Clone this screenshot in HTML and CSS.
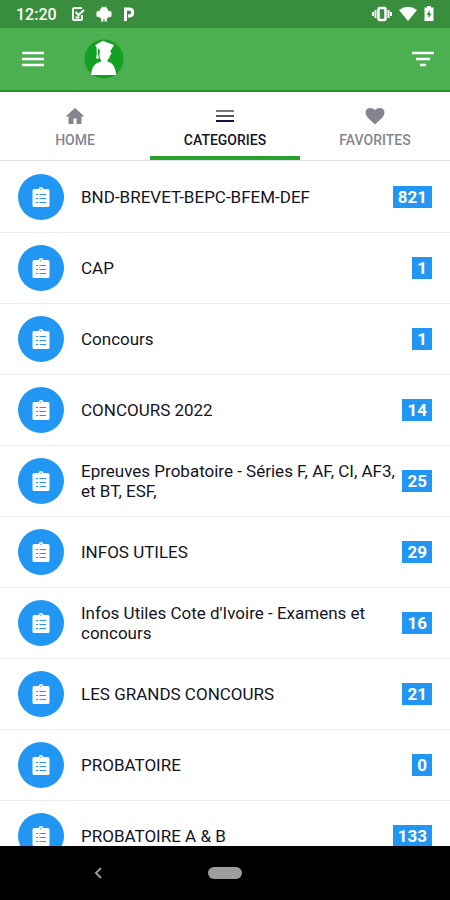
FILE: index.html
```html
<!DOCTYPE html>
<html lang="fr">
<head>
    <meta charset="UTF-8">
    <meta name="viewport" content="width=device-width, initial-scale=1.0">
    <title>Categories</title>
    <link rel="stylesheet" href="styles.css">
</head>
<body>
    <!-- Shared clipboard icon -->
    <svg class="sprite" aria-hidden="true">
        <symbol id="clipboard" viewBox="0 0 18 22">
            <path fill="#fff" d="M2 3h4.500a2.600 2.600 0 0 1 5 0H16a1.500 1.500 0 0 1 1.500 1.500v15A1.500 1.500 0 0 1 16 21H2a1.500 1.500 0 0 1-1.500-1.500v-15A1.500 1.500 0 0 1 2 3z"/>
            <circle cx="9" cy="3.200" r="0.700" fill="#2196f3"/>
            <path stroke="#2196f3" stroke-width="1" d="M4 8.500h2M7.500 8.500H14M4 12.500h2M7.500 12.500H14M4 16.500h2M7.500 16.500H14"/>
        </symbol>
    </svg>

    <div class="status-bar">
        <span class="clock">12:20</span>
        <div class="status-left">
            <svg width="14" height="16" viewBox="0 0 14 16" fill="none" stroke="#fff" stroke-width="2">
                <path d="M11 2H3.500Q2 2 2 3.500v9Q2 14 3.500 14h6q1.500 0 1.500-1.500V9"/>
                <path d="M4.500 6l3 3L13 4M4.500 11.500h4"/>
            </svg>
            <svg width="16" height="16" viewBox="0 0 16 16" fill="#fff">
                <path d="M3.500 5.500C3.500 3.500 5 2 6 1.500L5.300.5h1l.7.700h2l.7-.7h1L10 1.500c1 .5 2.500 2 2.500 4z"/>
                <path d="M3.500 5h9v7h-1.500v3.500H8.500V13H7.500v2.500H5V12H3.500z"/>
                <rect x="0.500" y="5" width="3.500" height="6" rx="1.500"/>
                <rect x="12" y="5" width="3.500" height="6" rx="1.500"/>
            </svg>
            <svg width="12" height="16" viewBox="0 0 12 16" fill="none" stroke="#fff" stroke-width="3">
                <path d="M2.500 15V3H6q3.700 0 3.700 3.500T6 10H5"/>
            </svg>
        </div>
        <div class="status-right">
            <svg width="20" height="16" viewBox="0 0 20 16" fill="none" stroke="#fff">
                <rect x="6.500" y="2" width="7" height="12" rx="1" stroke-width="2.500"/>
                <path stroke-width="2" d="M3.500 4v8M1 6v4M16.500 4v8M19 6v4"/>
            </svg>
            <svg width="18" height="16" viewBox="0 0 18 16" fill="#fff">
                <path d="M0 4Q9-2.500 18 4L9 15z"/>
            </svg>
            <svg width="10" height="16" viewBox="0 0 10 16">
                <path fill="#fff" d="M3 0h4v1.500h2.500V15H.5V1.500H3z"/>
                <path fill="#388e3c" d="M5.800 4L2.500 9h2v3.500l3-5h-2z"/>
            </svg>
        </div>
    </div>

    <header class="app-bar">
        <button class="icon-button" type="button" aria-label="Menu">
            <svg width="22" height="16" viewBox="0 0 22 16" stroke="#fff" stroke-width="2.500">
                <path d="M0 2h22M0 8h22M0 14h22"/>
            </svg>
        </button>
        <svg class="logo" width="40" height="40" viewBox="0 0 40 40">
            <circle cx="20" cy="20" r="19.500" fill="#13a025"/>
            <path fill="#fff" d="M11 6.300l7.700-4.600L30 6l-3 5H16l-3-2.500z"/>
            <path fill="#fff" d="M16 9h10.500v3.500l1 2.500-1.200 1q-.8 3.500-2.800 5v1.500q4.500 1 6.500 5 1.800 4 2.200 8.500H7q.3-5 2.300-8.500 2-3.500 7.700-5V21q-1.500-2-1.500-4z"/>
            <path fill="#fff" d="M12.500 7h1.500v8l1 4.500h-3l.8-4.500z"/>
        </svg>
        <button class="icon-button filter-button" type="button" aria-label="Filter">
            <svg width="22" height="16" viewBox="0 0 22 16" stroke="#fff" stroke-width="2.500">
                <path d="M0 2h22M4 8h14M8 14h6"/>
            </svg>
        </button>
    </header>

    <nav class="tabs">
        <a class="tab" href="#home">
            <svg width="20" height="18" viewBox="0 0 20 18" fill="currentColor">
                <path d="M10 1l9.500 8.500h-3V17h-5v-5.500h-3V17h-5V9.500h-3z"/>
            </svg>
            HOME
        </a>
        <a class="tab active" href="#categories" aria-current="page">
            <svg width="20" height="18" viewBox="0 0 20 18" fill="none" stroke-width="2">
                <path stroke="#77778a" d="M1 4h18"/>
                <path stroke="#55556a" d="M1 9h18"/>
                <path stroke="#15153a" d="M1 14h18"/>
            </svg>
            CATEGORIES
        </a>
        <a class="tab" href="#favorites">
            <svg width="20" height="18" viewBox="0 0 20 18" fill="currentColor">
                <path d="M10 17.500L3 11Q.5 8.500.5 5.800.5 1 5.500 1 8.300 1 10 3q1.700-2 4.500-2 5 0 5 4.800 0 2.700-2.500 5.200z"/>
            </svg>
            FAVORITES
        </a>
    </nav>

    <main class="categories">
        <ul class="category-list">
            <li><a class="category" href="#">
                <span class="avatar"><svg width="18" height="22"><use href="#clipboard"/></svg></span>
                <span class="name">BND-BREVET-BEPC-BFEM-DEF</span>
                <span class="count">821</span>
            </a></li>
            <li><a class="category" href="#">
                <span class="avatar"><svg width="18" height="22"><use href="#clipboard"/></svg></span>
                <span class="name">CAP</span>
                <span class="count">1</span>
            </a></li>
            <li><a class="category" href="#">
                <span class="avatar"><svg width="18" height="22"><use href="#clipboard"/></svg></span>
                <span class="name">Concours</span>
                <span class="count">1</span>
            </a></li>
            <li><a class="category" href="#">
                <span class="avatar"><svg width="18" height="22"><use href="#clipboard"/></svg></span>
                <span class="name">CONCOURS 2022</span>
                <span class="count">14</span>
            </a></li>
            <li><a class="category" href="#">
                <span class="avatar"><svg width="18" height="22"><use href="#clipboard"/></svg></span>
                <span class="name">Epreuves Probatoire - Séries F, AF, CI, AF3, et BT, ESF,</span>
                <span class="count">25</span>
            </a></li>
            <li><a class="category" href="#">
                <span class="avatar"><svg width="18" height="22"><use href="#clipboard"/></svg></span>
                <span class="name">INFOS UTILES</span>
                <span class="count">29</span>
            </a></li>
            <li><a class="category" href="#">
                <span class="avatar"><svg width="18" height="22"><use href="#clipboard"/></svg></span>
                <span class="name">Infos Utiles Cote d'Ivoire - Examens et concours</span>
                <span class="count">16</span>
            </a></li>
            <li><a class="category" href="#">
                <span class="avatar"><svg width="18" height="22"><use href="#clipboard"/></svg></span>
                <span class="name">LES GRANDS CONCOURS</span>
                <span class="count">21</span>
            </a></li>
            <li><a class="category" href="#">
                <span class="avatar"><svg width="18" height="22"><use href="#clipboard"/></svg></span>
                <span class="name">PROBATOIRE</span>
                <span class="count">0</span>
            </a></li>
            <li><a class="category" href="#">
                <span class="avatar"><svg width="18" height="22"><use href="#clipboard"/></svg></span>
                <span class="name">PROBATOIRE A &amp; B</span>
                <span class="count">133</span>
            </a></li>
        </ul>
    </main>

    <div class="system-nav">
        <button class="back" type="button" aria-label="Back">
            <svg width="8" height="12" viewBox="0 0 8 12" fill="none" stroke="#999" stroke-width="2">
                <path d="M7 1L2 6l5 5"/>
            </svg>
        </button>
        <button class="home-pill" type="button" aria-label="Home"></button>
    </div>
</body>
</html>
```
FILE: styles.css
```css
* {
    box-sizing: border-box;
}
body {
    font-family: Roboto, "Liberation Sans", sans-serif;
    display: flex;
    flex-direction: column;
    height: 100vh;
    margin: 0;
    background-color: #ffffff;
    color: #14141f;
}
a {
    color: inherit;
    text-decoration: none;
}
button {
    background: none;
    border: none;
    padding: 0;
    cursor: pointer;
}
svg {
    display: block;
}
.sprite {
    position: absolute;
    width: 0;
    height: 0;
}

/* Status bar */
.status-bar {
    display: flex;
    align-items: center;
    flex-shrink: 0;
    height: 28px;
    padding: 0 16px;
    background-color: #388e3c;
    color: #ffffff;
}
.clock {
    font-size: 16px;
    font-weight: 500;
}
.status-left {
    display: flex;
    gap: 11px;
    margin-left: 14px;
}
.status-right {
    display: flex;
    gap: 7px;
    margin-left: auto;
}

/* App bar */
.app-bar {
    display: flex;
    align-items: center;
    flex-shrink: 0;
    height: 64px;
    padding: 0 16px;
    background-color: #4caf50;
    border-bottom: 2px solid #26982a;
}
.icon-button {
    padding: 6px;
}
.logo {
    margin-left: 34px;
}
.filter-button {
    margin-left: auto;
    margin-right: -6px;
}

/* Tabs */
.tabs {
    display: flex;
    flex-shrink: 0;
    height: 69px;
    border-bottom: 1px solid #e2e2e2;
}
.tab {
    flex: 1;
    display: flex;
    flex-direction: column;
    align-items: center;
    gap: 6px;
    padding-top: 15px;
    border-bottom: 4px solid transparent;
    color: #85858f;
    font-size: 14px;
    font-weight: 500;
    line-height: 18px;
}
.tab.active {
    color: #14142b;
    border-bottom-color: #26a32c;
}

/* Category list */
.categories {
    flex: 1;
    min-height: 0;
    overflow: hidden;
}
.category-list {
    list-style: none;
    margin: 0;
    padding: 1px 0 0;
}
.category {
    display: flex;
    align-items: center;
    min-height: 71px;
    padding: 0 18px;
    border-bottom: 1px solid #ebebeb;
}
.avatar {
    display: flex;
    align-items: center;
    justify-content: center;
    flex-shrink: 0;
    width: 46px;
    height: 46px;
    margin-right: 17px;
    border-radius: 50%;
    background-color: #2196f3;
}
.name {
    flex: 1;
    font-size: 17px;
    line-height: 20px;
}
.count {
    padding: 0 5px;
    background-color: #2196f3;
    color: #ffffff;
    font-size: 17px;
    font-weight: 700;
    line-height: 22px;
}

/* System navigation */
.system-nav {
    display: grid;
    grid-template-columns: 1fr 34px 1fr;
    align-items: center;
    flex-shrink: 0;
    height: 54px;
    background-color: #000000;
}
.back {
    justify-self: center;
    padding: 6px;
    margin-right: 12px;
}
.home-pill {
    height: 12px;
    border-radius: 6px;
    background-color: #9e9e9e;
}
```
